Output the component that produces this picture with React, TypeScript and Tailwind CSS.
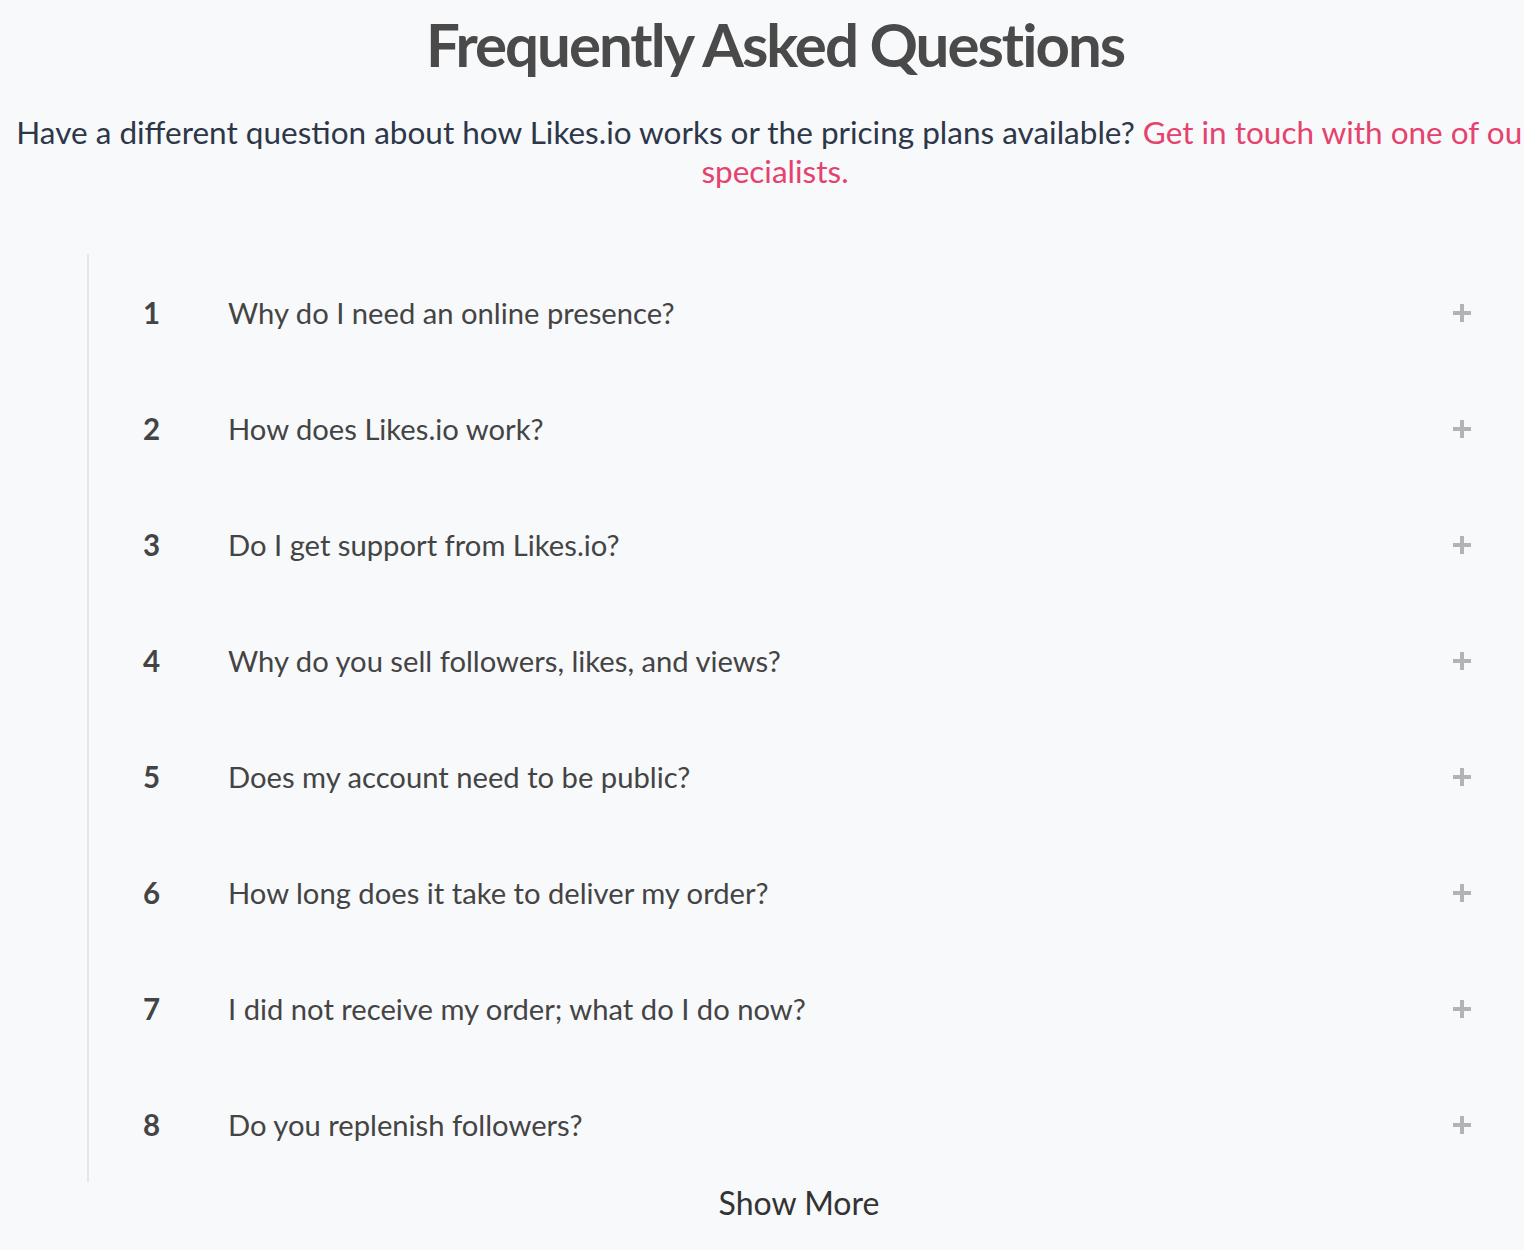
import React from 'react';

const QUESTIONS = [
  'Why do I need an online presence?',
  'How does Likes.io work?',
  'Do I get support from Likes.io?',
  'Why do you sell followers, likes, and views?',
  'Does my account need to be public?',
  'How long does it take to deliver my order?',
  'I did not receive my order; what do I do now?',
  'Do you replenish followers?',
];

function PlusIcon() {
  return (
    <svg width="18" height="18" viewBox="0 0 18 18" className="shrink-0">
      <rect x="0" y="7" width="18" height="4" fill="#b3b3b3" />
      <rect x="7" y="0" width="4" height="18" fill="#b3b3b3" />
    </svg>
  );
}

export default function App() {
  return (
    <div className="min-h-[1250px] w-full overflow-hidden bg-[#f8f9fb] font-['Lato',_'Open_Sans',_sans-serif]">
      {/* 見出しと説明文 */}
      <div className="ml-[5px] w-[1540px] text-center">
        <h1 className="pt-[6px] text-[60px] font-bold leading-[76px] tracking-[-2px] text-[#4a4a4a]">
          Frequently Asked Questions
        </h1>
        <p className="mt-[31px] text-[31.5px] leading-[39px] text-[#2d3748]">
          Have a different question about how Likes.io works or the pricing plans available?{' '}
          <a href="#" className="text-[#e5426e]">
            Get in touch with one of our specialists.
          </a>
        </p>
      </div>

      {/* 質問リスト */}
      <div className="ml-[87px] mt-[63px] w-[1424px]">
        <ul className="border-l-2 border-[#e6e7ea]">
          {QUESTIONS.map((q, i) => (
            <li key={q} className="flex h-[116px] items-center pl-[54px] pr-[40px] pt-[2px]">
              <span className="w-[85px] text-[29.5px] font-bold text-[#444]">{i + 1}</span>
              <span className="flex-1 text-[29.2px] text-[#444]">{q}</span>
              <PlusIcon />
            </li>
          ))}
        </ul>
        <div className="-mt-[3px] text-center text-[32px] text-[#333]">Show More</div>
      </div>
    </div>
  );
}
